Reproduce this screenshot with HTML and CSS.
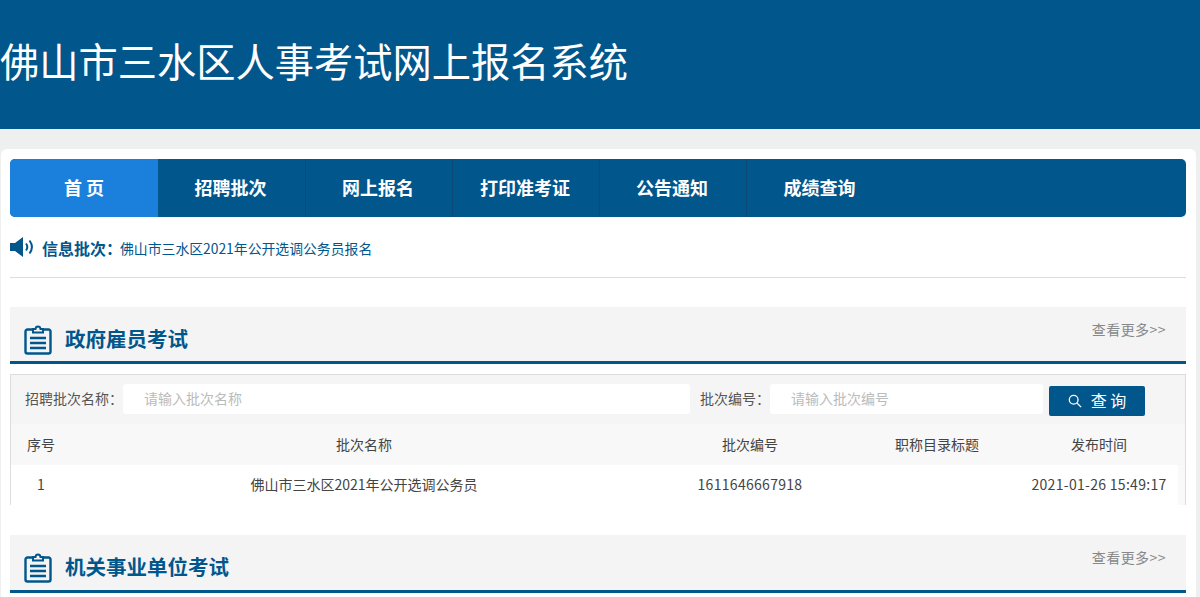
FILE: index.html
```html
<!DOCTYPE html>
<html lang="zh-CN">
<head>
<meta charset="utf-8">
<title>佛山市三水区人事考试网上报名系统</title>
<link rel="stylesheet" href="styles.css">
</head>
<body>
<svg class="sprite" width="0" height="0" aria-hidden="true">
  <symbol id="clip" viewBox="0 0 28 30">
    <path d="M9 4.500H3.500A2 2 0 0 0 1.500 6.500V26.500A2 2 0 0 0 3.500 28.500H24.500A2 2 0 0 0 26.500 26.500V6.500A2 2 0 0 0 24.500 4.500H19" fill="none" stroke="currentColor" stroke-width="2.400"/>
    <path d="M9 7.500V4H11.500C11.800 .6 16.200 .6 16.500 4H19V7.500Z" fill="none" stroke="currentColor" stroke-width="2"/>
    <path d="M6 13H22M6 18H22M6 23H22" fill="none" stroke="currentColor" stroke-width="2.400"/>
  </symbol>
</svg>
<header class="banner"><h1>佛山市三水区人事考试网上报名系统</h1></header>
<main class="card">
  <nav class="nav">
    <a class="nav-item active">首 页</a>
    <a class="nav-item second">招聘批次</a>
    <a class="nav-item">网上报名</a>
    <a class="nav-item">打印准考证</a>
    <a class="nav-item">公告通知</a>
    <a class="nav-item">成绩查询</a>
  </nav>
  <div class="notice">
    <svg class="speaker" viewBox="0 0 25 20" aria-hidden="true">
      <path d="M0 6H5L13 0V20L5 14H0Z" fill="currentColor"/>
      <path d="M16 6.500C17.500 8.500 17.500 11.500 16 13.500M19.500 3.500C22.500 7.500 22.500 12.500 19.500 16.500" fill="none" stroke="currentColor" stroke-width="2"/>
    </svg>
    <strong class="notice-label">信息批次：</strong>
    <a class="notice-link">佛山市三水区2021年公开选调公务员报名</a>
  </div>
  <section class="section">
    <div class="section-head">
      <svg class="clip"><use href="#clip"/></svg>
      <h2>政府雇员考试</h2>
      <a class="more">查看更多&gt;&gt;</a>
    </div>
    <div class="box">
      <form class="filter">
        <label class="filter-label first">招聘批次名称：</label>
        <input class="filter-input wide" placeholder="请输入批次名称">
        <label class="filter-label">批次编号：</label>
        <input class="filter-input narrow" placeholder="请输入批次编号">
        <button class="search" type="button">
          <svg class="search-icon" viewBox="0 0 16 16" aria-hidden="true"><circle cx="6.500" cy="6.500" r="5" fill="none" stroke="currentColor" stroke-width="1.500"/><path d="M10.200 10.200L15 15" stroke="currentColor" stroke-width="1.500"/></svg>
          <span class="search-text">查 询</span>
        </button>
      </form>
      <div class="row row-head">
        <span>序号</span><span>批次名称</span><span>批次编号</span><span>职称目录标题</span><span>发布时间</span>
      </div>
      <div class="row row-data">
        <span>1</span><span>佛山市三水区2021年公开选调公务员</span><span class="num">1611646667918</span><span></span><span class="num">2021-01-26 15:49:17</span>
      </div>
    </div>
  </section>
  <section class="section last">
    <div class="section-head">
      <svg class="clip"><use href="#clip"/></svg>
      <h2>机关事业单位考试</h2>
      <a class="more">查看更多&gt;&gt;</a>
    </div>
  </section>
</main>
</body>
</html>
```
FILE: styles.css
```css
* { box-sizing: border-box; }
html, body { margin: 0; padding: 0; }
body {
  background: #eeefef;
  font-family: "Noto Sans CJK SC", "Liberation Sans", sans-serif;
  font-size: 14px;
  color: #444;
}
.sprite { position: absolute; }
.banner {
  height: 129px;
  padding-bottom: 10px;
  background: #01568c;
  display: flex;
  align-items: center;
}
.banner h1 {
  margin: 0;
  color: #fff;
  font-size: 39.250px;
  font-weight: 400;
  line-height: 1;
}
.card {
  margin: 20px 4px 0 1px;
  padding: 10px 10px 4px 9px;
  background: #fff;
  border-radius: 6px 6px 0 0;
}
.nav {
  display: flex;
  height: 58px;
  background: #01568c;
  border-radius: 5px;
  overflow: hidden;
}
.nav-item {
  width: 147px;
  padding: 0 2px 3px 0;
  display: flex;
  align-items: center;
  justify-content: center;
  color: #fff;
  font-size: 18px;
  font-weight: 700;
  border-right: 1px solid #0e4a78;
}
.nav-item.active {
  width: 148px;
  padding-right: 0;
  background: #1b80db;
  border-right: 0;
}
.nav-item.second { width: 148px; }
.nav-item:last-child { border-right: 0; }
.notice {
  height: 61px;
  display: flex;
  align-items: center;
  padding-top: 2px;
  border-bottom: 1px solid #ddd;
  white-space: nowrap;
}
.speaker {
  flex: none;
  width: 25px;
  height: 20px;
  margin-top: -2px;
  margin-right: 7px;
  color: #01568c;
}
.notice-label {
  flex: none;
  font-size: 16px;
  color: #01568c;
  width: 78px;
}
.notice-link {
  font-size: 13.850px;
  color: #01568c;
}
.section { margin-top: 29px; }
.section-head {
  height: 57px;
  padding: 15px 20px 0 14px;
  display: flex;
  align-items: flex-start;
  background: #f4f4f4;
  border-bottom: 3px solid #01568c;
}
.section.last .section-head { height: 58px; }
.clip {
  width: 28px;
  height: 30px;
  margin-top: 3px;
  color: #01568c;
  flex: none;
}
.section-head h2 {
  margin: 1px 0 0 13px;
  font-size: 20.500px;
  line-height: 30px;
  font-weight: 700;
  color: #01568c;
}
.more {
  margin-left: auto;
  margin-top: -4px;
  font-size: 14px;
  line-height: 22px;
  letter-spacing: .45px;
  color: #888;
}
.box {
  margin-top: 10px;
  height: 131px;
  background: #f5f5f5;
  border: 1px solid #ddd;
  border-bottom: 0;
}
.filter {
  height: 49px;
  display: flex;
  align-items: flex-start;
  padding-top: 9px;
  padding-left: 14px;
}
.filter-label {
  line-height: 29px;
  color: #555;
  width: 98px;
  white-space: nowrap;
  font-size: 14px;
}
.filter-label.first { width: 98px; }
.filter-label:not(.first) { width: 70px; margin-left: 10px; }
.filter-input {
  height: 30px;
  border: 0;
  border-radius: 3px;
  background: #fff;
  padding: 0 21px 2px;
  font: inherit;
  outline: 0;
}
.filter-input::placeholder { color: #bbb; opacity: 1; }
.filter-input.wide { width: 567px; }
.filter-input.narrow { width: 273px; }
.search {
  margin: 2px 0 0 6px;
  width: 96px;
  height: 30px;
  border: 0;
  border-radius: 2px;
  background: #01568c;
  color: #fff;
  font: inherit;
  font-size: 16px;
  display: flex;
  align-items: center;
  justify-content: center;
  gap: 9px;
  padding: 0;
}
.search-text { position: relative; top: -1px; }
.search-icon { width: 14px; height: 14px; }
.row {
  display: grid;
  grid-template-columns: 60px 586px 186px 188px 136px;
  align-items: center;
  text-align: center;
  white-space: nowrap;
  color: #444;
  padding-bottom: 2px;
}
.num { letter-spacing: .3px; }
.row-head { height: 41px; background: #f8f8f8; }
.row-data {
  height: 40px;
  background: linear-gradient(to right, #fff 1167px, #f9f9f9 1167px);
}
.section.last { margin-top: 30px; }
```
